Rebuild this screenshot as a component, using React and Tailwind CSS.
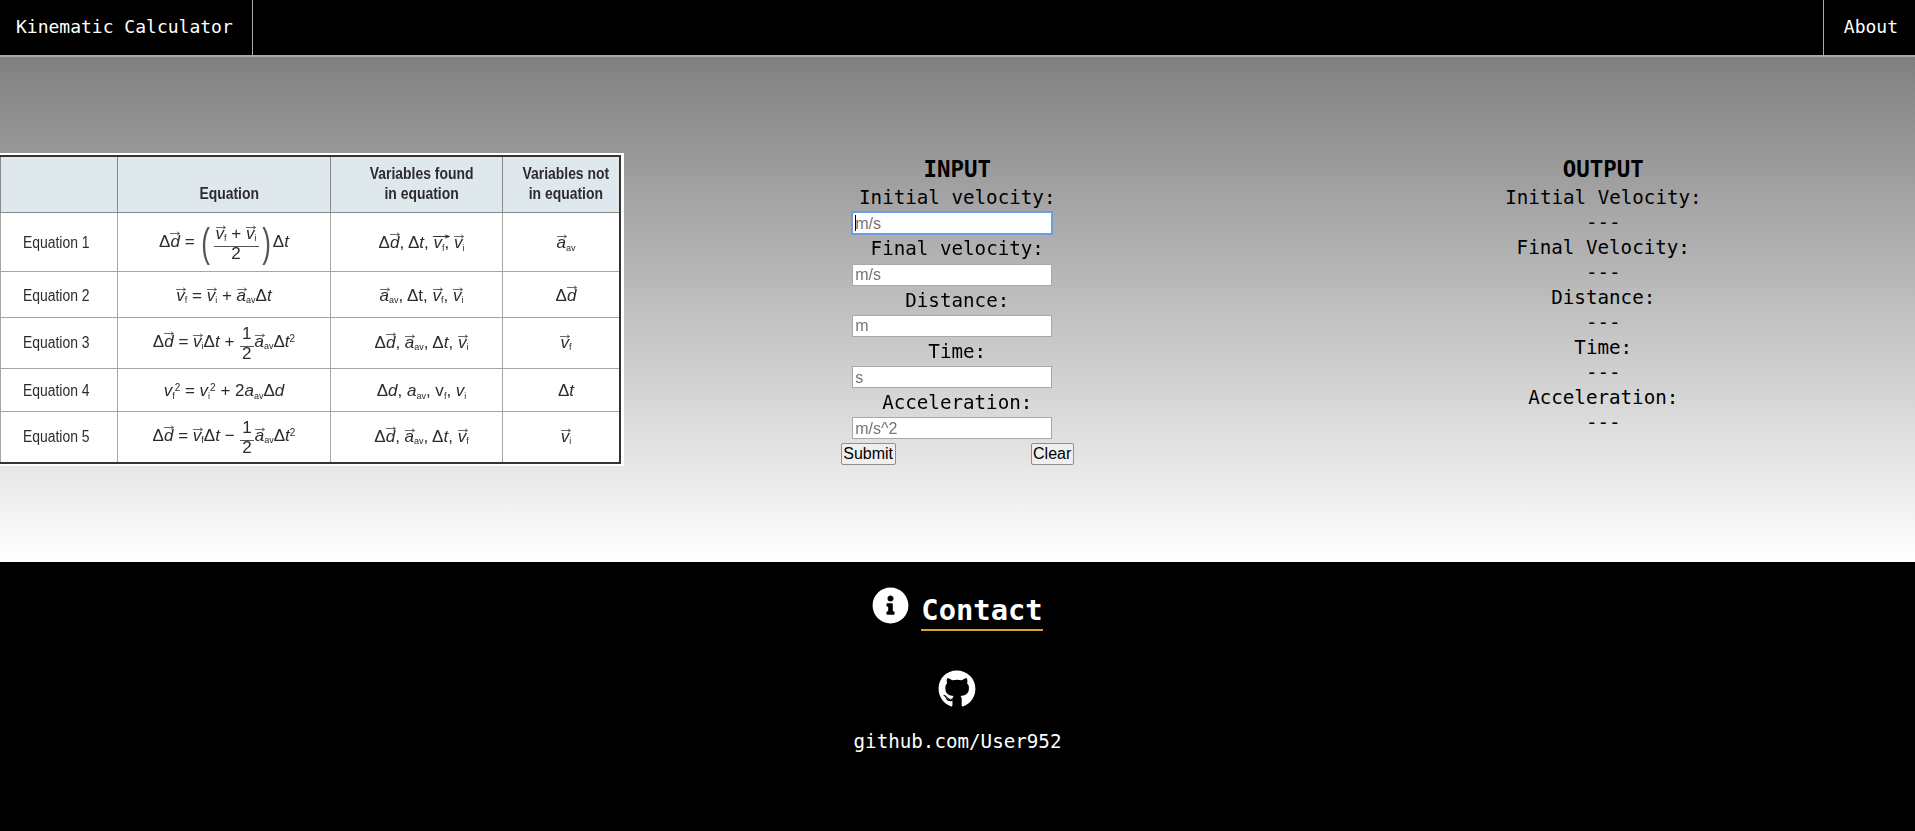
import { FaGithub, FaInfoCircle } from "react-icons/fa";

const mono = "font-['DejaVu_Sans_Mono','Liberation_Mono',monospace]";

// small arrow that sits over a vector symbol
function Vec({ children, sub, wide, tall }) {
  return (
    <span className="relative inline-block italic leading-[24px]">
      <svg
        viewBox="0 0 12 5"
        className={`absolute left-0 h-[5px] ${tall ? "top-[1px]" : "top-[3px]"} ${wide ? "w-[17px]" : "w-[10px]"}`}
        preserveAspectRatio="none"
      >
        <path d="M0 2.5H11M8.5 .8 11.5 2.5 8.5 4.2" fill="none" stroke="#333" strokeWidth="0.8" />
      </svg>
      {children}
      {sub && <sub className="text-[9px] not-italic">{sub}</sub>}
    </span>
  );
}

function Frac({ top, bottom, line }) {
  return (
    <span className="mx-[1px] inline-flex flex-col items-center align-middle">
      <span className={`-mb-[3px] leading-[24px] ${line ? "border-b border-[#555] px-[2px]" : ""}`}>{top}</span>
      <span className="leading-[20px]">{bottom}</span>
    </span>
  );
}

function Sym({ children, sub, sup }) {
  return (
    <span className="italic">
      {children}
      {sub && <sub className="text-[9px] not-italic">{sub}</sub>}
      {sup && <sup className="text-[10px] not-italic">{sup}</sup>}
    </span>
  );
}

const Paren = ({ children }) => (
  <span className="inline-block scale-x-[.65] align-middle text-[40px] font-light leading-none text-[#555]">
    {children}
  </span>
);

const rows = [
  {
    name: "Equation 1",
    h: "h-[59px]",
    pad: "pt-[3px]",
    eq: (
      <>
        Δ<Vec tall>d</Vec> = <Paren>(</Paren>
        <Frac line top={<><Vec sub="f">v</Vec> + <Vec sub="i">v</Vec></>} bottom="2" />
        <Paren>)</Paren>Δ<Sym>t</Sym>
      </>
    ),
    found: <>Δ<Vec tall>d</Vec>, Δ<Sym>t</Sym>, <Vec sub="f" wide>v</Vec>, <Vec sub="i">v</Vec></>,
    missing: <Vec sub="av">a</Vec>,
  },
  {
    name: "Equation 2",
    h: "h-[46px]",
    pad: "pt-[3px]",
    eq: <><Vec sub="f">v</Vec> = <Vec sub="i">v</Vec> + <Vec sub="av">a</Vec>Δ<Sym>t</Sym></>,
    found: <><Vec sub="av">a</Vec>, Δt, <Vec sub="f">v</Vec>, <Vec sub="i">v</Vec></>,
    missing: <>Δ<Vec tall>d</Vec></>,
  },
  {
    name: "Equation 3",
    h: "h-[51px]",
    pad: "",
    eq: (
      <>
        Δ<Vec tall>d</Vec> = <Vec sub="i">v</Vec>Δ<Sym>t</Sym> + <Frac top="1" bottom="2" line />
        <Vec sub="av">a</Vec>Δ<Sym sup="2">t</Sym>
      </>
    ),
    found: <>Δ<Vec tall>d</Vec>, <Vec sub="av">a</Vec>, Δ<Sym>t</Sym>, <Vec sub="i">v</Vec></>,
    missing: <Vec sub="f">v</Vec>,
  },
  {
    name: "Equation 4",
    h: "h-[43px]",
    pad: "pt-[3px]",
    eq: <><Sym sub="f" sup="2">v</Sym> = <Sym sub="i" sup="2">v</Sym> + 2<Sym sub="av">a</Sym>Δ<Sym>d</Sym></>,
    found: <>Δ<Sym>d</Sym>, <Sym sub="av">a</Sym>, v<sub className="text-[9px]">f</sub>, <Sym sub="i">v</Sym></>,
    missing: <>Δ<Sym>t</Sym></>,
  },
  {
    name: "Equation 5",
    h: "h-[52px]",
    pad: "",
    eq: (
      <>
        Δ<Vec tall>d</Vec> = <Vec sub="f">v</Vec>Δ<Sym>t</Sym> − <Frac top="1" bottom="2" line />
        <Vec sub="av">a</Vec>Δ<Sym sup="2">t</Sym>
      </>
    ),
    found: <>Δ<Vec tall>d</Vec>, <Vec sub="av">a</Vec>, Δ<Sym>t</Sym>, <Vec sub="f">v</Vec></>,
    missing: <Vec sub="i">v</Vec>,
  },
];

const inputs = [
  { label: "Initial velocity:", unit: "m/s", focus: true },
  { label: "Final velocity:", unit: "m/s" },
  { label: "Distance:", unit: "m" },
  { label: "Time:", unit: "s" },
  { label: "Acceleration:", unit: "m/s^2" },
];

const outputs = ["Initial Velocity:", "Final Velocity:", "Distance:", "Time:", "Acceleration:"];

function EquationTable() {
  const cell = "inline-block scale-x-[.87] whitespace-nowrap";
  const math = "inline-block whitespace-nowrap text-[17px]";
  return (
    <div className="w-[624px] shrink-0 border-y-2 border-r-[3px] border-white bg-white font-['Liberation_Sans',sans-serif] text-[16px] text-[#2c2c2c] blur-[0.3px]">
      <table className="h-[308px] w-full table-fixed border-2 border-l-[1px] border-[#333] border-collapse">
        <colgroup>
          <col className="w-[117px]" />
          <col className="w-[213px]" />
          <col className="w-[172px]" />
          <col />
        </colgroup>
        <thead>
          <tr className="h-[56px] bg-[#dfe8ed] font-bold leading-[20px]">
            <th className="border border-[#8a8a8a]"></th>
            <th className="border border-[#8a8a8a] pl-[10px] pt-[19px]">
              <span className={cell}>Equation</span>
            </th>
            <th className="border border-[#8a8a8a] pl-[10px]">
              <span className={cell}>Variables found<br />in equation</span>
            </th>
            <th className="border border-[#8a8a8a] pl-[10px]">
              <span className={cell}>Variables not<br />in equation</span>
            </th>
          </tr>
        </thead>
        <tbody>
          {rows.map((row) => (
            <tr key={row.name} className={row.h}>
              <td className={`border border-[#a5a5a5] pr-[5px] text-center ${row.pad}`}>
                <span className={cell}>{row.name}</span>
              </td>
              <td className={`border border-[#a5a5a5] text-center ${row.pad}`}>
                <span className={math}>{row.eq}</span>
              </td>
              <td className={`border border-[#a5a5a5] pl-[10px] text-center ${row.pad}`}>
                <span className={math}>{row.found}</span>
              </td>
              <td className={`border border-[#a5a5a5] pl-[10px] text-center ${row.pad}`}>
                <span className={math}>{row.missing}</span>
              </td>
            </tr>
          ))}
        </tbody>
      </table>
    </div>
  );
}

export default function App() {
  return (
    <div className={`flex h-[831px] flex-col ${mono}`}>
      {/* Navbar */}
      <nav className="flex h-[57px] justify-between border-b-2 border-[#a9a9a9] bg-black text-[18px] text-white">
        <a href="#" className="flex items-center border-r border-[#a9a9a9] pb-[2px] pl-[16px] pr-[19px]">
          Kinematic Calculator
        </a>
        <a href="#" className="flex items-center border-l border-[#a9a9a9] pb-[2px] pl-[20px] pr-[17px]">
          About
        </a>
      </nav>

      {/* Main section */}
      <main className="flex h-[505px] items-start bg-[linear-gradient(#808080,#ffffff)] pt-[96px] text-[19.2px] leading-[25.3px] text-black">
        <EquationTable />

        <div className="flex flex-1 justify-around pt-[1px]">
          {/* Input form */}
          <form className="ml-[3px] flex w-[233px] flex-col" onSubmit={(e) => e.preventDefault()}>
            <h2 className="text-center text-[22.4px] font-bold leading-[30px]">INPUT</h2>
            {inputs.map((item) => (
              <div key={item.label} className="relative flex flex-col items-center">
                <label className="h-[25.3px] pt-[1px] text-center">{item.label}</label>
                <input
                  type="text"
                  placeholder={item.unit}
                  autoFocus={item.focus}
                  className="mt-[3px] mb-[1px] mr-[10px] h-[22px] w-[200px] border border-[#a8a8a8] bg-white px-[2px] font-['Liberation_Sans',sans-serif] text-[16px] placeholder:text-[#757575] focus:border-[#6f9be0] focus:outline-1 focus:outline-[#6f9be0]"
                />
                {item.focus && <span className="absolute left-[14px] top-[31px] h-[16px] w-px bg-black"></span>}
              </div>
            ))}
            <div className="mt-[3px] flex justify-between font-['Liberation_Sans',sans-serif] text-[16px] leading-[18px]">
              <button type="submit" className="rounded-[2px] border border-[#8f8f8f] bg-[#efefef] px-[1.5px] py-[1px]">
                Submit
              </button>
              <button type="reset" className="rounded-[2px] border border-[#8f8f8f] bg-[#efefef] px-[1.5px] py-[1px]">
                Clear
              </button>
            </div>
          </form>

          {/* Output */}
          <div className="ml-[4px] w-[196px] whitespace-nowrap text-center leading-[25px]">
            <h2 className="text-[22.4px] font-bold leading-[31px]">OUTPUT</h2>
            {outputs.map((label) => (
              <div key={label}>
                <p>{label}</p>
                <p>---</p>
              </div>
            ))}
          </div>
        </div>
      </main>

      {/* Footer */}
      <footer className="flex flex-1 flex-col items-center bg-black pt-[25px] text-white">
        <div className="flex items-start gap-[12px]">
          <FaInfoCircle className="h-[37px] w-[37px]" />
          <h2 className="mt-[4px] border-b-2 border-[#daa520] text-[28.8px] font-bold leading-[38px]">
            Contact
          </h2>
        </div>
        <FaGithub className="mr-[2px] mt-[39px] h-[38px] w-[38px]" />
        <a href="#" className="mt-[20px] text-[19.2px] leading-[27px]">
          github.com/User952
        </a>
      </footer>
    </div>
  );
}
